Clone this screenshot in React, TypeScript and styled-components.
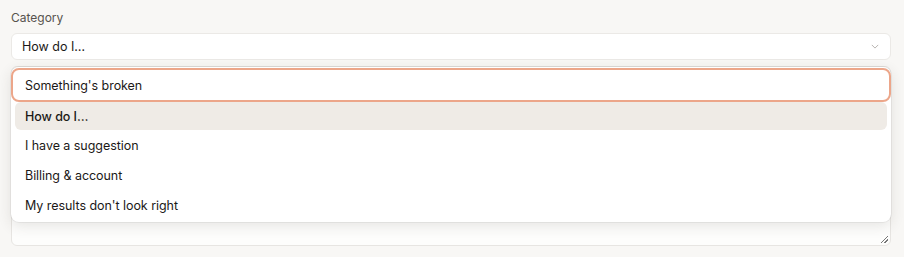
import React from 'react';
import styled, { createGlobalStyle } from 'styled-components';

const GlobalStyle = createGlobalStyle`
  html, body {
    margin: 0;
    padding: 0;
    background: #f8f7f5;
    font-family: Inter, "Noto Sans", sans-serif;
  }
`;

const options = [
  "Something's broken",
  'How do I…',
  'I have a suggestion',
  'Billing & account',
  "My results don't look right",
];

function App() {
  const selected = 1;
  const focused = 0;
  return (
    <>
      <GlobalStyle />
      <Page>
        <Label>Category</Label>
        <Field>
          <Trigger>
            <span>{options[selected]}</span>
            <Chevron viewBox="0 0 10 6">
              <path d="M1 1l4 4 4-4" fill="none" stroke="currentColor" strokeWidth="1.2" />
            </Chevron>
          </Trigger>
          <Message />
          <Menu>
            {options.map((o, i) => (
              <Option key={o} $focused={i === focused} $selected={i === selected}>
                {o}
              </Option>
            ))}
          </Menu>
        </Field>
      </Page>
    </>
  );
}

export default App;

const Page = styled.div`
  padding: 10px 13px 0 11px;
  display: flex;
  flex-direction: column;
`;

const Label = styled.div`
  font-size: 12px;
  color: #57534e;
  line-height: 16px;
  margin-bottom: 7px;
`;

const Field = styled.div`
  position: relative;
  display: flex;
  flex-direction: column;
  gap: 6px;
`;

const Trigger = styled.div`
  height: 27px;
  box-sizing: border-box;
  background: #fff;
  border: 1px solid #ebe9e6;
  border-radius: 6px;
  display: flex;
  align-items: center;
  justify-content: space-between;
  padding: 0 11px 0 10px;
  font-size: 12.5px;
  color: #1c1917;
`;

const Chevron = styled.svg`
  width: 8px;
  height: 5px;
  color: #b5b2ae;
`;

const Message = styled.div`
  height: 180px;
  box-sizing: border-box;
  background: #fdfdfc;
  border: 1px solid #e7e5e2;
  border-radius: 6px;
  position: relative;
  &::after {
    content: '';
    position: absolute;
    right: 2px;
    bottom: 2px;
    width: 7px;
    height: 7px;
    background: linear-gradient(135deg, transparent 45%, #777 45%, #777 55%, transparent 55%, transparent 70%, #777 70%, #777 80%, transparent 80%);
  }
`;

const Menu = styled.div`
  position: absolute;
  top: 34px;
  left: 0;
  right: 0;
  background: #fff;
  border-radius: 8px;
  box-shadow: 0 4px 14px rgba(60, 50, 40, 0.12), 0 0 0 1px rgba(0, 0, 0, 0.05);
  padding: 0 4px 2px;
  display: flex;
  flex-direction: column;
`;

const Option = styled.div<{ $focused: boolean; $selected: boolean }>`
  height: ${(p) => (p.$focused ? '34px' : '30px')};
  box-sizing: border-box;
  display: flex;
  align-items: center;
  font-size: 12.5px;
  letter-spacing: -0.05px;
  color: #1c1917;
  padding-left: 10px;
  border-radius: 6px;
  font-weight: ${(p) => (p.$selected ? 500 : 400)};
  background: ${(p) => (p.$selected ? '#efebe6' : 'transparent')};
  ${(p) =>
    p.$focused &&
    `
    margin: 1px -4px 0;
    padding-left: 12px;
    border: 2px solid #eca68a;
    border-radius: 8px;
  `}
  ${(p) => p.$selected && 'height: 28px;'}
`;
